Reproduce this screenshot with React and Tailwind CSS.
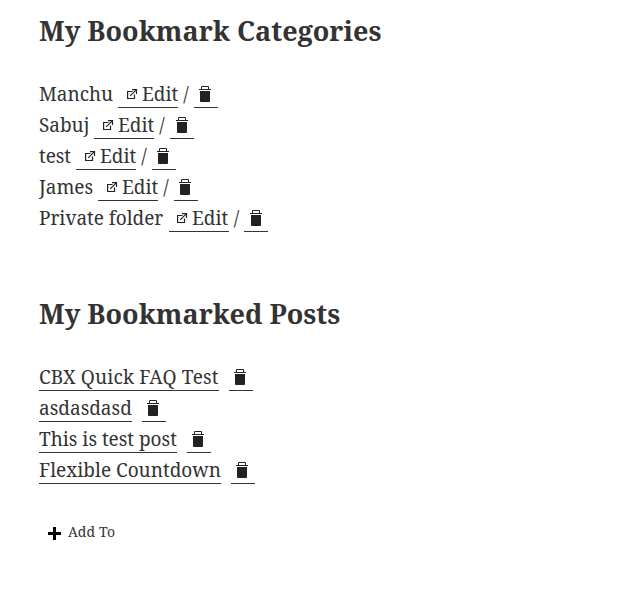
const categories = [
  { name: "Manchu", width: "w-[79px]", editPad: "pl-[9px]", slash: "w-4", pad: "pl-[5px]" },
  { name: "Sabuj", width: "w-[55px]", editPad: "pl-[9px]", slash: "w-4", pad: "pl-1.5" },
  { name: "test", width: "w-[37px]", editPad: "pl-[9px]", slash: "w-4", pad: "pl-[5px]" },
  { name: "James", width: "w-[59px]", editPad: "pl-[9px]", slash: "w-4", pad: "pl-[5px]" },
  { name: "Private folder", width: "w-[130px]", editPad: "pl-2", slash: "w-[15px]", pad: "pl-1.5" },
];

const posts = [
  { title: "CBX Quick FAQ Test", width: "w-[180px] tracking-[0.15px]" },
  { title: "asdasdasd", width: "w-[93px]" },
  { title: "This is test post", width: "w-[138px]" },
  { title: "Flexible Countdown", width: "w-[182px]" },
];

function EditIcon() {
  return (
    <svg className="mt-2 h-[11px] w-[11px] shrink-0" viewBox="0 0 11 11" fill="none" stroke="#222" strokeWidth="1.2" aria-hidden="true">
      <path d="M5.5 2.5H0.6V9.5H7.5V5.5" />
      <path d="M5 0.6H9.5V5" />
      <path d="M9.5 0.6L3.2 6.9" />
    </svg>
  );
}

function DeleteLink({ pad = "pl-[5px]" }) {
  return (
    <a href="#" aria-label="Delete" className={`block h-[27px] w-6 shrink-0 border-b border-[#333] pt-[5px] ${pad}`}>
      <svg className="h-4 w-3" viewBox="0 0 12 16" fill="#222" aria-hidden="true">
        <path d="M2 3V1Q2 0 3 0H9Q10 0 10 1V3H9V1H3V3Z" />
        <path d="M0 3H12V4H0Z" />
        <path d="M1 5H11V15Q11 16 10 16H2Q1 16 1 15Z" />
      </svg>
    </a>
  );
}

function Heading({ children }) {
  return <h2 className="h-[34px] whitespace-nowrap text-[27px] font-bold leading-[34px]">{children}</h2>;
}

export default function App() {
  return (
    <main className="h-[596px] overflow-hidden bg-white pl-[39px] pt-[14px] font-['Noto_Serif','DejaVu_Serif',serif] text-[19px] leading-[27px] text-[#333]">
      <Heading>My Bookmark Categories</Heading>
      <ul className="mt-[33px]">
        {categories.map((c) => (
          <li key={c.name} className="flex h-[31px] whitespace-nowrap">
            <span className={`shrink-0 tracking-[-0.03px] ${c.width}`}>{c.name}</span>
            <a href="#" className={`flex h-[27px] w-[60px] shrink-0 gap-1 border-b border-[#333] ${c.editPad}`}>
              <EditIcon />
              <span>Edit</span>
            </a>
            <span className={`shrink-0 text-center ${c.slash}`}>/</span>
            <DeleteLink pad={c.pad} />
          </li>
        ))}
      </ul>
      <div className="mt-[61px]">
        <Heading>My Bookmarked Posts</Heading>
      </div>
      <ul className="mt-[33px]">
        {posts.map((p) => (
          <li key={p.title} className="flex h-[31px] gap-2.5 whitespace-nowrap">
            <a href="#" className={`h-[27px] shrink-0 border-b border-[#333] ${p.width}`}>{p.title}</a>
            <DeleteLink />
          </li>
        ))}
      </ul>
      <button className="ml-[9px] mt-[34px] flex h-5 items-center gap-[7px] text-[14px] leading-5 tracking-[0.15px]">
        <svg className="mt-[3px] h-[13px] w-[13px]" viewBox="0 0 13 13" fill="#000" aria-hidden="true">
          <path d="M5 0H8V5H13V8H8V13H5V8H0V5H5Z" />
        </svg>
        <span>Add To</span>
      </button>
    </main>
  );
}
